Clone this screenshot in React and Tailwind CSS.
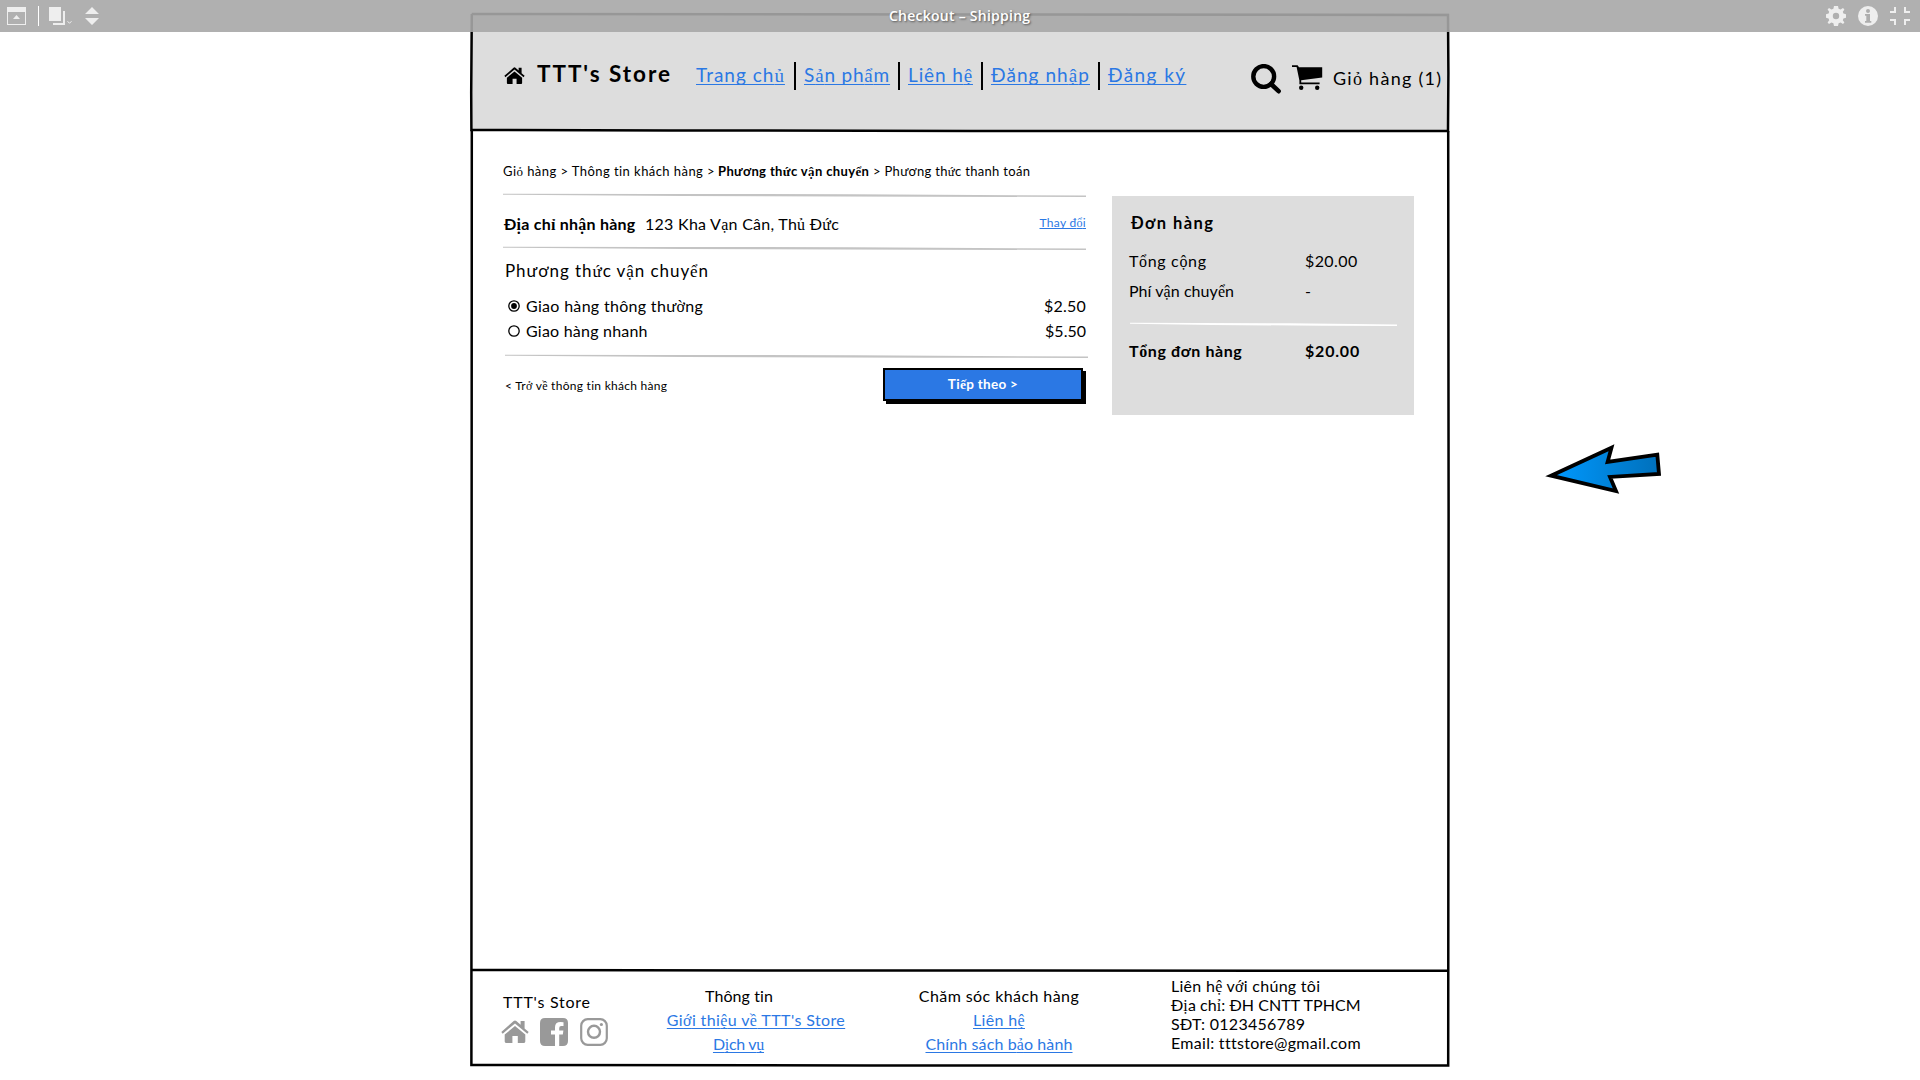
// The wireframe font lacks Vietnamese tone-mark letters, which appear in a serif fallback.
const TONED = /([\u1ea0-\u1ef9]+)/;

function T({ children, className = "", link = false }) {
  return (
    <span
      className={
        "inline-block whitespace-nowrap " +
        (link ? "text-[#2b78e4] underline decoration-1 underline-offset-[2px] [text-decoration-skip-ink:none] " : "") +
        className
      }
    >
      {children.split(TONED).filter(Boolean).map((part, i) =>
        TONED.test(part) ? (
          <span key={i} className="font-['Liberation_Serif',serif] leading-none">{part}</span>
        ) : (
          part
        )
      )}
    </span>
  );
}

function Divider({ className = "" }) {
  return (
    <svg className={"block h-[6px] " + className} viewBox="0 0 584 6" preserveAspectRatio="none" fill="currentColor">
      <path d="M0 1.8 L150 2 L350 2.2 L584 3.6 L584 5 L420 4.7 L180 4 L0 2.8Z" />
    </svg>
  );
}

function Home({ className }) {
  return (
    <svg className={className} viewBox="0 0 28 23" fill="currentColor">
      <path d="M14 6 L24.3 14.6 V21.6 Q24.3 23 23 23 H16.8 V16 H11.4 V23 H5 Q3.7 23 3.7 21.6 V14.6Z" />
      <path d="M0.3 12 L12.7 1 Q14 0 15.3 1 L19.6 4.8 V0.9 H23.6 V8.4 L27.7 12 L26.3 13.7 L14 3.4 L1.7 13.7Z" />
    </svg>
  );
}

const NAV = [
  ["Trang chủ", "w-[90px]", "tracking-[1.01px]"],
  ["Sản phẩm", "w-[86px]", "tracking-[0.81px]"],
  ["Liên hệ", "w-[65px]", "tracking-[0.87px]"],
  ["Đăng nhập", "w-[99px]", "tracking-[1.06px]"],
  ["Đăng ký", "w-[79px]", "tracking-[1.4px]"],
];

const SHIPPING = [
  { name: "Giao hàng thông thường", cls: "tracking-[0.31px]", price: "$2.50", priceCls: "tracking-[0.2px]", checked: true },
  { name: "Giao hàng nhanh", cls: "tracking-[0.22px]", price: "$5.50", priceCls: "", checked: false },
];

function Header() {
  return (
    <header className="flex h-[118px] items-start bg-[#dddddd] pl-[33px] pt-[49px]">
      <Home className="mt-[5px] h-[17px] w-[21px]" />
      <div className="ml-3 w-[159px]">
        <T className="text-[22.5px] font-bold tracking-[1.95px]">TTT's Store</T>
      </div>
      <nav className="flex gap-2 text-[19px]">
        {NAV.map(([label, width, tracking], i) => (
          <div key={label} className="flex gap-2">
            {i > 0 && <i className="h-7 w-[2px] bg-black" />}
            <a className={"pt-px " + width}><T link className={tracking}>{label}</T></a>
          </div>
        ))}
      </nav>
      <svg className="ml-16 mt-[2px] size-[30px]" viewBox="0 0 30 30" fill="none" stroke="#000">
        <circle cx="12.7" cy="12.5" r="10.4" strokeWidth="4.4" />
        <path d="M20 20 L27.6 27.2" strokeWidth="4.6" strokeLinecap="round" />
      </svg>
      <svg className="ml-[11px] mt-[3px] h-[27px] w-[31px]" viewBox="0 0 31 27">
        <path d="M0 0.2 H5.6 L7 2.2 H30.2 V12.6 L9.2 15.2 V17.6 H27.6 V19.3 H7.4 V15.5 L4.6 1.9 H0Z" />
        <circle cx="9.2" cy="22.8" r="2.2" />
        <circle cx="25.2" cy="22.8" r="2.2" />
      </svg>
      <div className="ml-2.5 mt-1"><T className="text-[18px] tracking-[1.27px]">Giỏ hàng (1)</T></div>
    </header>
  );
}

function Checkout() {
  return (
    <section className="mt-[11px] w-[583px]">
      <Divider className="w-full text-[#c4c4c4]" />
      <div className="flex h-[47px] justify-between pt-[13px]">
        <div className="flex pl-px pt-px">
          <div className="w-[141px]"><T className="font-bold tracking-[0.24px]">Địa chỉ nhận hàng</T></div>
          <T className="tracking-[0.27px]">123 Kha Vạn Cân, Thủ Đức</T>
        </div>
        <T link className="text-[12px] tracking-[0.3px] !underline-offset-1">Thay đổi</T>
      </div>
      <Divider className="w-full text-[#c4c4c4]" />
      <div className="mb-3 mt-2 h-[23px] pl-[2px]"><T className="text-[17px] tracking-[0.94px]">Phương thức vận chuyển</T></div>
      {SHIPPING.map((s) => (
        <div key={s.name} className="flex h-[25px] items-start pl-[5px]">
          <svg className="mr-[6px] mt-[6px] size-[12px]" viewBox="0 0 12 12">
            <circle cx="6" cy="6" r="5.2" fill="none" stroke="#000" strokeWidth="1.3" />
            {s.checked && <circle cx="6" cy="6" r="2.9" />}
          </svg>
          <T className={s.cls}>{s.name}</T>
          <T className={"ml-auto " + s.priceCls}>{s.price}</T>
        </div>
      ))}
      <Divider className="ml-[2px] mt-[9px] w-full text-[#c4c4c4]" />
      <div className="flex items-start pt-[9px]">
        <div className="mt-1 w-[380px] pl-[2px]"><T className="text-[12px] tracking-[0.28px]">{"< Trở về thông tin khách hàng"}</T></div>
        <button className="h-[33px] w-[200px] border-2 border-black bg-[#2b78e4] pb-px text-[13.5px] font-bold text-white shadow-[3px_3px_0_0_#000]">
          <T className="tracking-[0.29px]">{"Tiếp theo >"}</T>
        </button>
      </div>
    </section>
  );
}

function OrderSummary() {
  return (
    <aside className="ml-[26px] mt-[15px] h-[219px] w-[302px] bg-[#dddddd] pl-[17px] pt-[15px]">
      <div className="pl-[2px]"><T className="text-[16.5px] font-bold tracking-[1.44px]">Đơn hàng</T></div>
      <div className="mt-[14px] flex">
        <div className="w-44"><T className="tracking-[0.66px]">Tổng cộng</T></div>
        <T className="tracking-[0.4px]">$20.00</T>
      </div>
      <div className="mt-[6px] flex">
        <div className="w-44"><T className="tracking-[0.06px]">Phí vận chuyển</T></div>-
      </div>
      <Divider className="ml-px mt-[18px] w-[267px] text-white" />
      <div className="mt-[12px] flex font-bold">
        <div className="w-44"><T className="tracking-[0.6px]">Tổng đơn hàng</T></div>
        <T className="tracking-[0.8px]">$20.00</T>
      </div>
    </aside>
  );
}

function Footer() {
  return (
    <footer className="flex h-[96px] items-start">
      <div className="w-[190px] pl-[30px] pt-5">
        <div className="pl-[2px]"><T className="tracking-[0.75px]">TTT's Store</T></div>
        <div className="mt-1 flex gap-3 text-[#999999]">
          <Home className="mr-[-1px] mt-[2px] h-[23px] w-[28px]" />
          <svg className="size-[28px]" viewBox="0 0 28 28" fill="currentColor">
            <path d="M5 0H23Q28 0 28 5V23Q28 28 23 28H19.2V16.6H22.8L23.4 12.4H19.2V10Q19.2 8 21.2 8H23.5V4.2Q15 2.6 15 9.3V12.4H11V16.6H15V28H5Q0 28 0 23V5Q0 0 5 0Z" />
          </svg>
          <svg className="size-[28px]" viewBox="0 0 28 28" fill="none" stroke="currentColor">
            <rect x="1.2" y="1.2" width="25.6" height="25.6" rx="6.5" strokeWidth="2.2" />
            <circle cx="14" cy="13.8" r="6" strokeWidth="2.4" />
            <circle cx="21.4" cy="6.5" r="1.6" fill="currentColor" stroke="none" />
          </svg>
        </div>
      </div>
      <div className="flex w-[190px] flex-col items-center pt-[14px]">
        <T className="mr-[34px] tracking-[0.07px]">Thông tin</T>
        <T link className="tracking-[0.39px]">Giới thiệu về TTT's Store</T>
        <T link className="mr-[35px] tracking-[-0.3px]">Dịch vụ</T>
      </div>
      <div className="ml-[53px] flex w-[190px] flex-col items-center pt-[14px]">
        <T className="tracking-[0.42px]">Chăm sóc khách hàng</T>
        <T link className="tracking-[0.34px]">Liên hệ</T>
        <T link className="tracking-[0.11px]">Chính sách bảo hành</T>
      </div>
      <div className="ml-[77px] flex flex-col items-start pt-[6px] leading-[19px]">
        <T className="tracking-[0.28px]">Liên hệ với chúng tôi</T>
        <T className="tracking-[0.06px]">Địa chỉ: ĐH CNTT TPHCM</T>
        <T className="tracking-[0.3px]">SĐT: 0123456789</T>
        <T className="tracking-[0.29px]">Email: tttstore@gmail.com</T>
      </div>
    </footer>
  );
}

function TopBar() {
  return (
    <div className="absolute inset-x-0 top-0 flex h-8 items-center bg-[rgba(167,167,167,0.9)] text-[#eeeeee]">
      <svg className="ml-[7px] h-[18px] w-[19px]" viewBox="0 0 19 18" fill="currentColor">
        <path fillRule="evenodd" d="M0 0H19V18H0Z M1 5V17H18V5Z" />
        <path d="M6 12 L9.5 8 L13 12Z" />
      </svg>
      <i className="ml-3 h-5 w-px bg-white" />
      <svg className="ml-[10px] h-[18px] w-[24px]" viewBox="0 0 24 18" fill="currentColor">
        <path d="M0 0H12V14H0Z M14 4H16V18H4V16H14Z" />
        <path d="M18.5 14.2 L20.5 16.3 L22.5 14.2" fill="none" stroke="currentColor" />
      </svg>
      <svg className="ml-[12px] h-[18px] w-[14px]" viewBox="0 0 14 18" fill="currentColor">
        <path d="M7 0 L14 7H0Z M0 11H14L7 18Z" />
      </svg>
      <div className="absolute left-[889px] top-1 font-['Open_Sans',sans-serif] text-[14px] font-semibold text-white [text-shadow:1px_1px_2px_rgba(0,0,0,0.5)]">
        <T className="tracking-[0.25px]">Checkout – Shipping</T>
      </div>
      <svg className="ml-auto size-[20px]" viewBox="-10 -10 20 20" fill="currentColor">
        <path fillRule="evenodd" d="M-2 -10H2L2.6 -7.2L4.6 -6.4L7 -8L8.4 -6.6L6.8 -4.2L7.4 -2.4L10 -1.8V1.8L7.4 2.4L6.8 4.2L8.4 6.6L7 8L4.6 6.4L2.6 7.2L2 10H-2L-2.6 7.2L-4.6 6.4L-7 8L-8.4 6.6L-6.8 4.2L-7.4 2.4L-10 1.8V-1.8L-7.4 -2.4L-6.8 -4.2L-8.4 -6.6L-7 -8L-4.6 -6.4L-2.6 -7.2Z M0 -3.2A3.2 3.2 0 1 0 0 3.2A3.2 3.2 0 1 0 0 -3.2Z" />
      </svg>
      <svg className="ml-3 size-[20px]" viewBox="0 0 20 20">
        <circle cx="10" cy="10" r="10" fill="currentColor" />
        <g fill="#aeaeae"><circle cx="10" cy="5" r="2" /><path d="M7 8H12V15H13.3V16.8H7V15H8.3V9.8H7Z" /></g>
      </svg>
      <svg className="ml-3 mr-[10px] h-[18px] w-[20px]" viewBox="0 0 20 18" fill="none" stroke="currentColor" strokeWidth="2">
        <path d="M5 0V5H0 M15 0V5H20 M5 18V13H0 M15 18V13H20" />
      </svg>
    </div>
  );
}

export default function App() {
  return (
    <div className="relative h-[1080px] w-[1920px] overflow-hidden bg-white pt-[13px] font-['Lato',sans-serif] text-base leading-6 text-black">
      <div className="relative mx-auto flex h-[1053px] w-[978px] flex-col">
        <Header />
        <main className="flex-1 pl-8 pt-[30px]">
          <div className="flex h-5 text-[13px] leading-5">
            <div className="w-[215px]"><T className="tracking-[0.44px]">{"Giỏ hàng > Thông tin khách hàng >"}</T></div>
            <div className="w-[155px]"><T className="font-bold tracking-[0.37px]">Phương thức vận chuyển</T></div>
            <T className="tracking-[0.31px]">{"> Phương thức thanh toán"}</T>
          </div>
          <div className="flex items-start">
            <Checkout />
            <OrderSummary />
          </div>
        </main>
        <Footer />

        {/* hand-drawn outlines of the header, body and footer boxes */}
        <svg className="pointer-events-none absolute left-[-2px] top-[-2px] h-[1058px] w-[982px]" viewBox="-2 -2 982 1058" fill="none" stroke="#000" strokeWidth="2.5">
          <path d="M0.8 1 L500 1.4 L977 2 L977.4 60 L977 118 L500 118 L200 117.4 L0.4 117 L0.2 80 L0.8 1" />
          <path d="M0.8 117 L0.6 600 L0.4 1052 L400 1052.4 L977.2 1052.6 L977.6 500 L977.2 118" />
          <path d="M0.6 957 L300 957.4 L977 957.8" />
        </svg>
      </div>

      <svg className="absolute left-[1545px] top-[443px] h-[52px] w-[118px]" viewBox="1545 443 118 52">
        <defs>
          <linearGradient id="pointer"><stop offset="0" stopColor="#0099ff" /><stop offset="1" stopColor="#0070bb" /></linearGradient>
        </defs>
        <path d="M1551 475.7 L1611.5 447.7 L1607.6 462 L1657.3 454.7 L1659 474 L1610 476.9 L1616 491Z" fill="url(#pointer)" stroke="#000" strokeWidth="3.8" />
      </svg>

      <TopBar />
    </div>
  );
}
